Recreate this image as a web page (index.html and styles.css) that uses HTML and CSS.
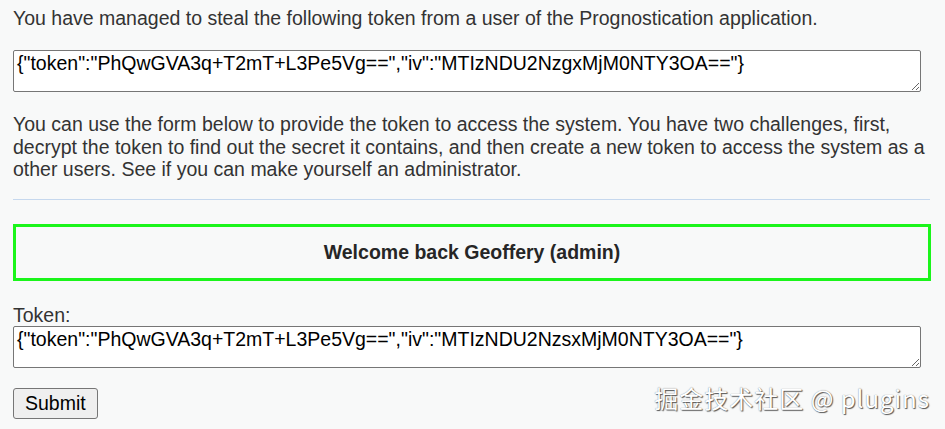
FILE: index.html
```html
<!DOCTYPE html>
<html>
<head>
<meta charset="utf-8">
<link rel="stylesheet" href="styles.css">
</head>
<body>
<div class="page">
  <p class="intro">You have managed to steal the following token from a user of the Prognostication application.</p>
  <textarea class="token-box" readonly>{"token":"PhQwGVA3q+T2mT+L3Pe5Vg==","iv":"MTIzNDU2NzgxMjM0NTY3OA=="}</textarea>
  <p class="desc">You can use the form below to provide the token to access the system. You have two challenges, first, decrypt the token to find out the secret it contains, and then create a new token to access the system as a other users. See if you can make yourself an administrator.</p>
  <hr class="rule">
  <div class="welcome">Welcome back Geoffery (admin)</div>
  <form class="form">
    <label class="label">Token:</label>
    <textarea class="token-box token-input">{"token":"PhQwGVA3q+T2mT+L3Pe5Vg==","iv":"MTIzNDU2NzsxMjM0NTY3OA=="}</textarea>
    <button type="button" class="submit">Submit</button>
  </form>
</div>
<div class="watermark">掘金技术社区 @ plugins</div>
</body>
</html>
```
FILE: styles.css
```css
html, body {
  margin: 0;
  padding: 0;
  background: #f8f9f9;
}
body {
  font-family: "Liberation Sans", Arial, sans-serif;
  font-size: 19.5px;
  color: #333333;
  height: 429px;
  overflow: hidden;
  position: relative;
}
.page {
  padding: 0 13px;
}
.intro {
  margin: 0;
  padding-top: 7px;
  line-height: 22px;
}
.token-box {
  display: block;
  box-sizing: border-box;
  width: 908px;
  height: 42px;
  margin-top: 21px;
  padding: 1px 3px;
  font-family: "Liberation Sans", Arial, sans-serif;
  font-size: 19.5px;
  line-height: 22px;
  color: #000;
  background: #fff;
  border: 1px solid #767676;
  border-radius: 2px;
  resize: vertical;
  overflow: hidden;
}
.desc {
  margin: 21px 0 0;
  line-height: 22.5px;
}
.rule {
  margin: 18px 2px 0 0;
  border: 0;
  border-top: 1px solid #c6d8ee;
  height: 0;
}
.welcome {
  margin-top: 24px;
  margin-right: 1px;
  height: 57px;
  box-sizing: border-box;
  border: 3px solid #1bf51b;
  display: flex;
  align-items: center;
  justify-content: center;
  font-weight: bold;
  color: #262626;
}
.form {
  display: flex;
  flex-direction: column;
  align-items: flex-start;
  margin-top: 23px;
}
.label {
  line-height: 22px;
}
.token-input {
  margin-top: 0;
}
.submit {
  margin-top: 20px;
  font-family: "Liberation Sans", Arial, sans-serif;
  font-size: 19.5px;
  color: #000;
  padding: 3px 11px;
  background: #efefef;
  border: 1px solid #767676;
  border-radius: 3px;
  line-height: 23px;
}
.watermark {
  position: absolute;
  right: 15px;
  top: 380px;
  font-family: "Noto Sans CJK SC", "Noto Sans", sans-serif;
  font-size: 24px;
  color: #ffffff;
  letter-spacing: 1px;
  text-shadow: 1px 1px 1px #555, 0 0 1px #777;
}
```
